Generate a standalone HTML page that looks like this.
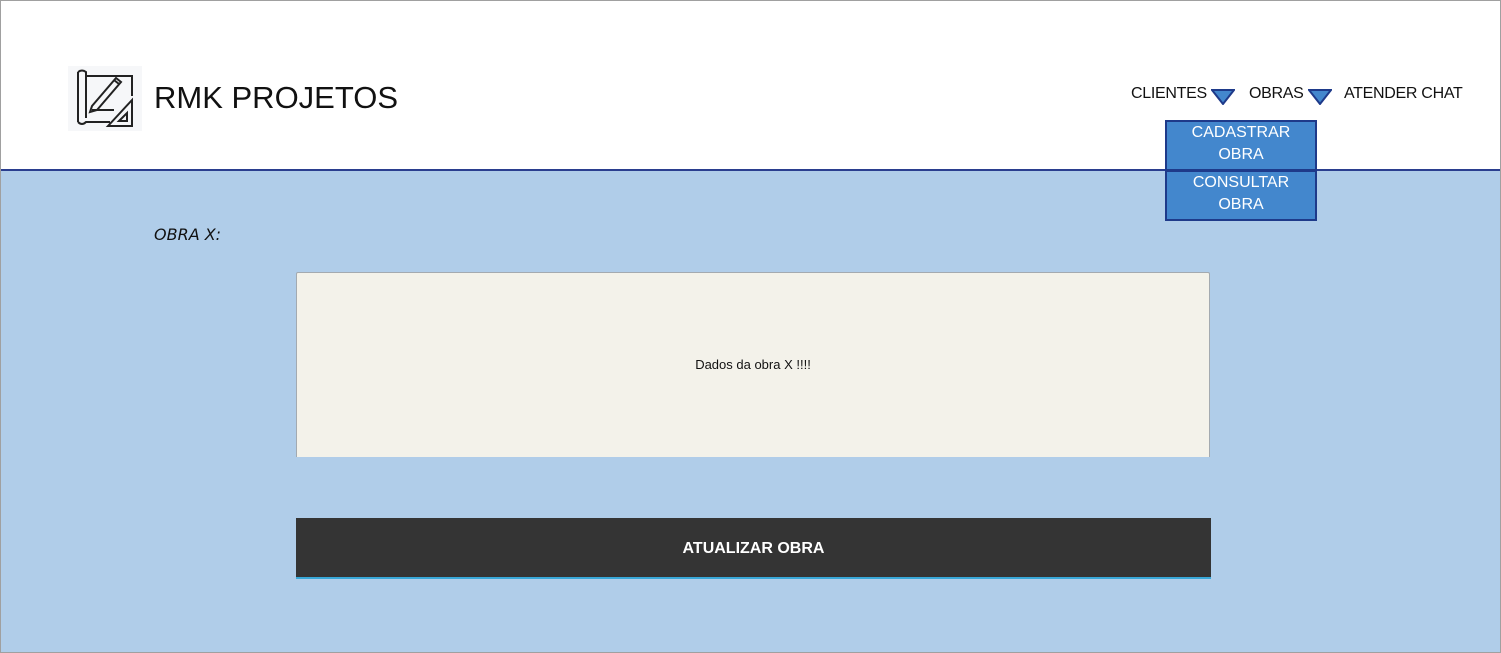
<!DOCTYPE html>
<html><head><style>
*{margin:0;padding:0;box-sizing:border-box}
body{width:1501px;height:653px;background:#b0cde9;font-family:"Liberation Sans",sans-serif;position:relative;overflow:hidden}
.frame{position:absolute;left:0;top:0;width:1501px;height:653px;border:1px solid #a0a0a0;pointer-events:none;z-index:5}
.hdr{position:absolute;left:0;top:0;width:1501px;height:169px;background:#fff}
.line{position:absolute;left:0;top:169px;width:1501px;height:2px;background:#2a3e8f}
.logo{position:absolute;left:68px;top:66px;width:74px;height:65px;background:#f6f7f9}
.title{position:absolute;left:154px;top:80px;font-size:31px;color:#111}
.nav{position:absolute;top:85px;font-size:16px;color:#111;letter-spacing:-0.3px}
.tri{position:absolute;top:89px}
.dd{position:absolute;left:1165px;width:152px;height:51px;background:#4387cd;border:2px solid #1e3a8a;color:#fff;font-size:16px;text-align:center;line-height:22px;padding-top:0}
.ob{position:absolute;left:154px;top:225px;font-family:"DejaVu Sans",sans-serif;font-size:16px;font-style:italic;color:#111}
.box{position:absolute;left:296px;top:272px;width:914px;height:185px;background:#f3f2ea;border:1px solid #a3aab0;border-bottom:none;border-radius:2px 2px 0 0;font-size:13px;text-align:center;padding-top:84px;color:#111}
.btn{position:absolute;left:296px;top:518px;width:915px;height:61px;background:#343434;border-bottom:2px solid #38a8d8;color:#fff;font-weight:bold;font-size:16px;text-align:center;line-height:61px}
</style></head><body>
<div class="hdr"></div>
<div class="line"></div>
<div class="logo"><svg width="74" height="65" viewBox="0 0 74 65" fill="none" stroke="#222" stroke-width="2"><path d="M10 6 v50 M10 6 q4 -3 8 0 v4 h46 v20 M10 56 q4 4 8 0 h24 M18 10 v42"/><path d="M24 40 l24 -28 l5 4 l-24 28 l-7 2 z M46 14 l5 4"/><path d="M24 44 h22"/><path d="M40 60 l24 -26 v26 z M51 55 l8 -8 v8 z"/></svg></div>
<div class="title">RMK PROJETOS</div>
<div class="nav" style="left:1131px">CLIENTES</div>
<svg class="tri" style="left:1211px" width="24" height="16"><path d="M1 1 L23 1 L12 15 Z" fill="#4387cd" stroke="#1e3a8a" stroke-width="2"/></svg>
<div class="nav" style="left:1249px">OBRAS</div>
<svg class="tri" style="left:1308px" width="24" height="16"><path d="M1 1 L23 1 L12 15 Z" fill="#4387cd" stroke="#1e3a8a" stroke-width="2"/></svg>
<div class="nav" style="left:1344px">ATENDER CHAT</div>
<div class="dd" style="top:120px">CADASTRAR<br>OBRA</div>
<div class="dd" style="top:170px">CONSULTAR<br>OBRA</div>
<div class="ob">OBRA X:</div>
<div class="box">Dados da obra X !!!!</div>
<div class="btn">ATUALIZAR OBRA</div>
<div class="frame"></div>
</body></html>
